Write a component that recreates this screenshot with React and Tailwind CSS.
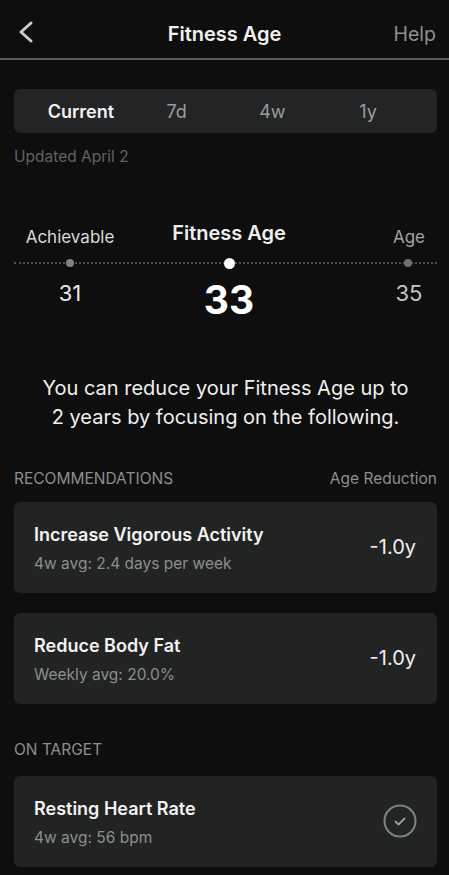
const recs = [
  { title: "Increase Vigorous Activity", sub: "4w avg: 2.4 days per week", value: "-1.0y" },
  { title: "Reduce Body Fat", sub: "Weekly avg: 20.0%", value: "-1.0y" },
];

function Card({ title, sub, children }) {
  return (
    <div className="h-[91px] rounded-md bg-[#222323] pl-5 pr-[21px] flex items-center justify-between">
      <div className="flex flex-col pt-[4px]">
        <span className="text-[18px] font-semibold text-[#f2f2f2] leading-[22px]">{title}</span>
        <span className="mt-[8px] text-[15.5px] text-[#8b8f90] leading-[20px]">{sub}</span>
      </div>
      {children}
    </div>
  );
}

export default function App() {
  return (
    <div className="w-[449px] h-[875px] overflow-hidden bg-[#0e0e0e] text-white" style={{ fontFamily: "Inter, 'Noto Sans', sans-serif" }}>
      {/* Header */}
      <header className="h-[60px] relative flex justify-center pt-[21px] border-b-2 border-[#56605f]">
        <svg className="absolute left-[16px] top-[20px]" width="20" height="24" viewBox="0 0 20 24" fill="none">
          <path d="M15 3L5 12l10 9" stroke="#c9cccc" strokeWidth="3" strokeLinecap="round" strokeLinejoin="round" />
        </svg>
        <span className="text-[20px] font-semibold text-[#f0f0f0] leading-[26px]">Fitness Age</span>
        <span className="absolute right-[13px] top-[21px] text-[19.5px] text-[#8a9192] leading-[26px]">Help</span>
      </header>

      <div className="pl-[14px] pr-[12px]">
        {/* Segmented tabs */}
        <div className="mt-[29px] h-[44px] rounded-md bg-[#232425] grid grid-cols-4 pl-[19px] pr-[21px] items-center text-[18px]">
          <span className="text-center font-semibold text-[#f2f2f2]">Current</span>
          <span className="text-center text-[#9a9e9f]">7d</span>
          <span className="text-center text-[#9a9e9f]">4w</span>
          <span className="text-center text-[#9a9e9f]">1y</span>
        </div>
        <div className="mt-[12px] text-[15.5px] text-[#5f6466]">Updated April 2</div>

        {/* Scale */}
        <div className="mt-[50px]">
          <div className="grid grid-cols-[112px_206px_1fr_56px] items-end h-[30px]">
            <span className="text-center text-[17px] text-[#d8dada] leading-[22px]">Achievable</span>
            <span className="text-center text-[20px] font-semibold text-[#eeeeee] leading-[26px] mb-[2px]">Fitness Age</span>
            <span />
            <span className="text-center text-[17px] text-[#a0a4a4] leading-[22px]">Age</span>
          </div>
          <div className="relative mt-[10px] h-[10px] flex items-center">
            <div className="w-full border-t-2 border-dotted border-[#4d5252]" />
            <div className="absolute left-[52px] w-[8px] h-[8px] rounded-full bg-[#7d8282]" />
            <div className="absolute left-[210px] w-[11px] h-[11px] rounded-full bg-white" />
            <div className="absolute left-[390px] w-[8px] h-[8px] rounded-full bg-[#6c7272]" />
          </div>
          <div className="grid grid-cols-[112px_206px_1fr_56px] items-start">
            <span className="text-center text-[22px] mt-[9px] text-[#e8e8e8]">31</span>
            <span className="text-center text-[39px] font-bold text-white leading-[54px] mt-[5px]">33</span>
            <span />
            <span className="text-center text-[22px] mt-[9px] text-[#c0c4c4]">35</span>
          </div>
        </div>

        <p className="mt-[47px] text-center text-[20px] leading-[29px] text-[#f0f0f0]">
          You can reduce your Fitness Age up to
          <br />
          2 years by focusing on the following.
        </p>

        <div className="mt-[35px] flex justify-between text-[15.5px] text-[#8a8f90]">
          <span>RECOMMENDATIONS</span>
          <span>Age Reduction</span>
        </div>

        <div className="mt-[11px] flex flex-col gap-[20px]">
          {recs.map((r) => (
            <Card key={r.title} title={r.title} sub={r.sub}>
              <span className="text-[20px] text-[#f0f0f0]">{r.value}</span>
            </Card>
          ))}
        </div>

        <div className="mt-[34px] text-[15.5px] text-[#8a8f90]">ON TARGET</div>
        <div className="mt-[15px]">
          <Card title="Resting Heart Rate" sub="4w avg: 56 bpm">
            <svg width="34" height="34" viewBox="0 0 34 34" fill="none" className="mr-[-1px]">
              <circle cx="17" cy="17" r="15.5" stroke="#7b8383" strokeWidth="2" />
              <path d="M12.5 17.5l3 3 6-6" stroke="#9aa0a0" strokeWidth="1.8" strokeLinecap="round" strokeLinejoin="round" />
            </svg>
          </Card>
        </div>
      </div>
    </div>
  );
}
